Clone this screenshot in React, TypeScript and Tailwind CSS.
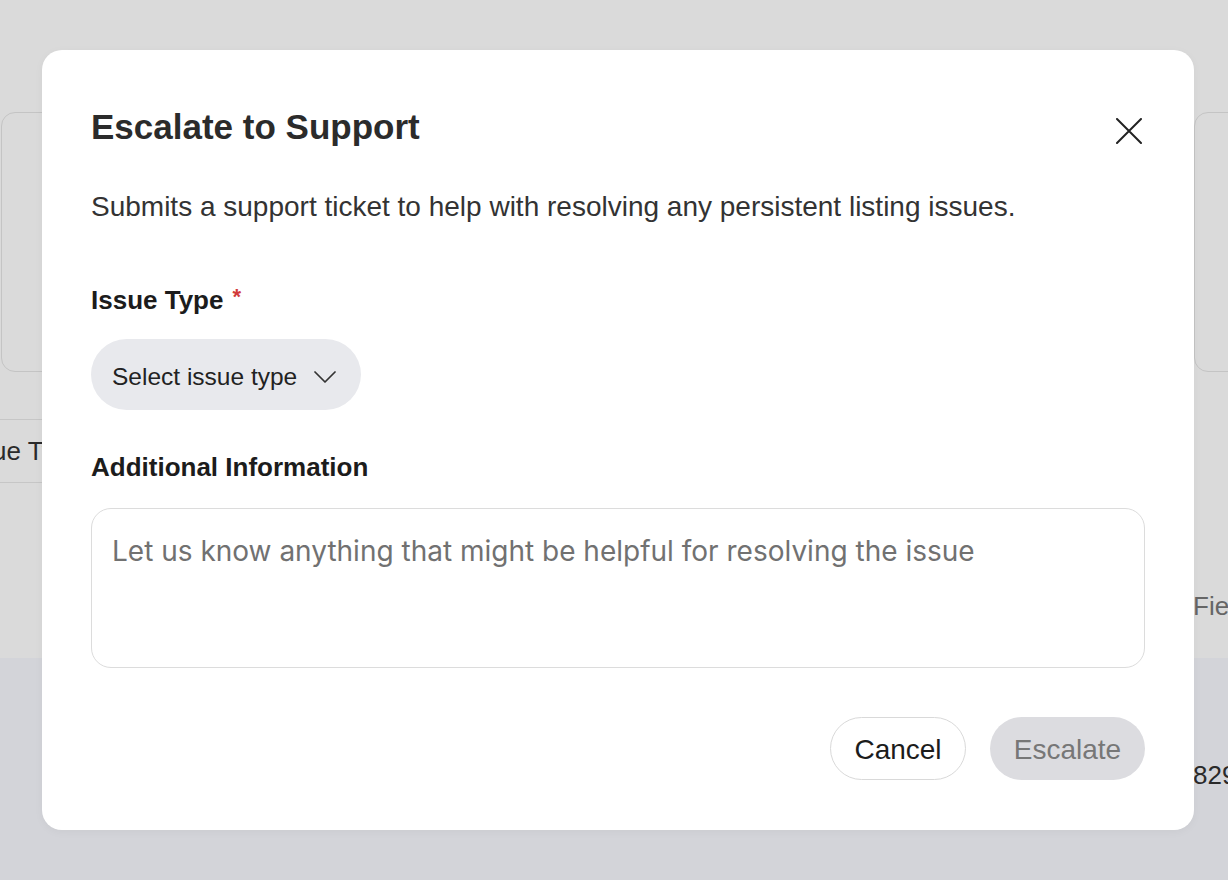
import React from "react";

export default function App() {
  return (
    <div
      className="relative w-[1228px] h-[880px] overflow-hidden bg-[#dadada]"
      style={{ fontFamily: '"Liberation Sans", Arial, sans-serif' }}
    >
      {/* Background page (dimmed) */}
      <div className="flex flex-col h-full">
        <div className="h-[658px] flex flex-col pt-[112px]">
          <div className="flex justify-between">
            <div className="w-[400px] h-[260px] ml-[1px] rounded-[14px] border border-[#c4c4c4]" />
            <div className="w-[120px] h-[260px] mr-[-86px] rounded-[14px] border border-[#c4c4c4]" />
          </div>
          <div className="mt-[47px] w-[300px] border-t border-b border-[#c6c6c6] h-[64px] flex items-center">
            <span className="ml-[-8px] text-[26px] text-[#2a2a2a]">ue Type</span>
          </div>
          <div className="flex justify-end mt-[108px]">
            <span className="w-[35px] text-[26px] text-[#666] leading-[30px] overflow-hidden whitespace-nowrap">Field</span>
          </div>
        </div>
        <div className="flex-1 bg-[#d3d4d9] flex justify-end pt-[102px]">
          <span className="w-[35px] text-[26px] text-[#2a2a2a] leading-[30px] overflow-hidden whitespace-nowrap">829%</span>
        </div>
      </div>

      {/* Modal */}
      <div className="absolute left-[42px] top-[50px] w-[1152px] h-[780px] bg-white rounded-[20px] shadow-[0_2px_10px_rgba(0,0,0,0.04)] px-[49px] pt-[57px] flex flex-col">
        <div className="flex justify-between items-start">
          <h2 className="text-[35px] leading-[40px] font-bold text-[#2b2b2b]">Escalate to Support</h2>
          <button className="mt-[11px] mr-[3px] w-[26px] h-[26px] flex items-center justify-center">
            <svg width="26" height="26" viewBox="0 0 26 26" fill="none" stroke="#222" strokeWidth="2" strokeLinecap="round">
              <path d="M1 1L25 25M25 1L1 25" />
            </svg>
          </button>
        </div>
        <p className="mt-[40px] text-[28px] leading-[40px] text-[#333]">
          Submits a support ticket to help with resolving any persistent listing issues.
        </p>

        <label className="mt-[55px] text-[26px] leading-[36px] font-bold text-[#1c1c1c] flex items-start">
          Issue Type
          <span className="ml-[9px] mt-[2px] text-[22px] leading-[26px] text-[#d23a3a] font-bold">*</span>
        </label>
        <div className="mt-[21px]">
          <button className="h-[71px] rounded-full bg-[#e8e9ed] pl-[21px] pr-[25px] pt-[5px] flex items-center gap-[17px] text-[24.5px] text-[#222]">
            <span>Select issue type</span>
            <svg width="22" height="12" viewBox="0 0 22 12" fill="none" stroke="#333" strokeWidth="1.75" strokeLinecap="round" strokeLinejoin="round">
              <path d="M1 1L11 11L21 1" />
            </svg>
          </button>
        </div>

        <label className="mt-[39px] text-[26px] leading-[36px] font-bold text-[#1c1c1c]">Additional Information</label>
        <div className="mt-[23px] h-[160px] rounded-[20px] border border-[#dcdcdc] pl-[20px] pt-[24px]">
          <div
            className="text-[28px] leading-[36px] text-[#717171]"
            style={{ fontFamily: 'Inter, "Liberation Sans", sans-serif' }}
          >
            Let us know anything that might be helpful for resolving the issue
          </div>
        </div>

        <div className="mt-[49px] flex justify-end gap-[24px]">
          <button className="h-[63px] w-[136px] pt-[2px] rounded-full border border-[#d9d9d9] bg-white text-[28px] text-[#1c1c1c]">
            Cancel
          </button>
          <button className="h-[63px] w-[155px] pt-[2px] rounded-full bg-[#dcdce0] text-[28px] text-[#777]">
            Escalate
          </button>
        </div>
      </div>
    </div>
  );
}
